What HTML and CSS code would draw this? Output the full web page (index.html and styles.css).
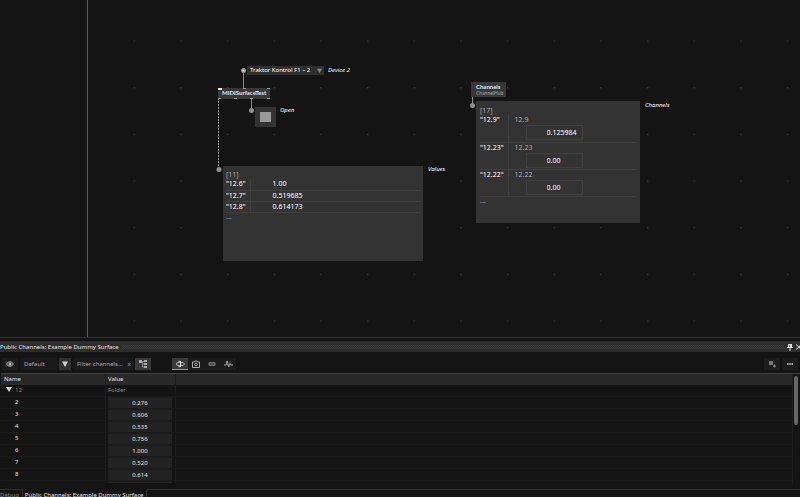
FILE: index.html
```
<!DOCTYPE html>
<html lang="en">
<head>
  <meta charset="UTF-8">
  <title>Public Channels: Example Dummy Surface</title>
  <link rel="stylesheet" href="styles.css">
</head>
<body>
  <main class="patch">
    <svg class="wires" aria-hidden="true">
      <defs>
        <pattern id="grid" x="-58" y="53" width="140" height="140" patternUnits="userSpaceOnUse" patternTransform="scale(.3333)">
          <rect x="39" y="69" width="4" height="3" fill="#4a4a4a"/>
        </pattern>
      </defs>
      <rect x="100" y="20" width="700" height="310" fill="url(#grid)"/>
      <path d="M87.5 0V338" stroke="#5c5c5c"/>
      <path d="M243.500 71V89M251.500 98V111M472.500 96V105" stroke="#8a8a8a"/>
      <path d="M218.500 98V169" stroke="#999" stroke-dasharray="2 1"/>
      <circle cx="243.500" cy="70.500" r="2.500" fill="#999"/>
      <circle cx="243.500" cy="70.500" r="1" fill="#eee"/>
      <circle cx="251.500" cy="110.500" r="2.500" fill="#909090"/>
      <circle cx="219" cy="169.500" r="2.500" fill="#909090"/>
      <circle cx="472.500" cy="105.500" r="2.500" fill="#909090"/>
    </svg>

    <select class="device" aria-label="Device 2">
      <option>Traktor Kontrol F1 – 2</option>
    </select>
    <svg class="device-arrow" viewBox="0 0 6 6"><path d="M0 1h6L3 6z" fill="#888"/></svg>
    <span class="label label-device">Device 2</span>

    <div class="node node-midi">
      MIDISurfaceTest
      <svg class="pins" viewBox="0 0 52 11">
        <path d="M0 .5h4M0 1.500h4" stroke="#eee"/>
        <path d="M25 .5h3M49 .5h3M0 10.500h3M16 10.500h3M32 10.500h3M49 10.500h3" stroke="#999"/>
      </svg>
    </div>
    <button class="bang" type="button" aria-label="Open"></button>
    <span class="label label-open">Open</span>

    <section class="pad pad-values">
      <div class="count">[11]</div>
      <table class="spread">
        <tr><th>"12.6"</th><td>1.00</td></tr>
        <tr><th>"12.7"</th><td>0.519685</td></tr>
        <tr><th>"12.8"</th><td>0.614173</td></tr>
      </table>
      <div class="more">...</div>
    </section>
    <span class="label label-values">Values</span>

    <div class="node node-hub">
      <div>Channels</div>
      <div class="category">ChannelHub</div>
    </div>
    <section class="pad pad-channels">
      <div class="count">[17]</div>
      <table class="spread spread-boxes">
        <tr><th>"12.9"</th><td><label for="c9">12.9</label><input id="c9" value="0.125984"></td></tr>
        <tr><th>"12.23"</th><td><label for="c23">12.23</label><input id="c23" value="0.00"></td></tr>
        <tr><th>"12.22"</th><td><label for="c22">12.22</label><input id="c22" value="0.00"></td></tr>
      </table>
      <div class="more">...</div>
    </section>
    <span class="label label-channels">Channels</span>
  </main>

  <section class="panel">
    <header class="titlebar">
      <span>Public Channels: Example Dummy Surface</span>
      <i class="grip"></i>
      <button type="button" aria-label="Pin">
        <svg width="6" height="8" viewBox="0 0 6 8"><path d="M1 1h4v3h1v1H0V4h1z" fill="#ddd"/><path d="M3 5v3" stroke="#ddd"/><path d="M2.500 2v2" stroke="#666"/></svg>
      </button>
      <button type="button" aria-label="Close">
        <svg width="4" height="6" viewBox="0 0 4 6"><path d="M0 .5l3 2.500-3 2.500M5 .5L3 3l2 2.500" fill="none" stroke="#ddd"/></svg>
      </button>
    </header>

    <div class="toolbar">
      <button class="tool eye" type="button" aria-label="Show">
        <svg width="8" height="8" viewBox="0 0 8 8"><path d="M.5 4Q4-.5 7.500 4 4 8.500 .5 4z" fill="none" stroke="#bbb"/><circle cx="4" cy="4" r="1.500" fill="#bbb"/></svg>
      </button>
      <div class="preset">
        <select aria-label="Preset"><option>Default</option></select>
        <svg width="12" height="12" viewBox="0 0 12 12"><path d="M3 3.500h6L6 9z" fill="#ccc"/></svg>
      </div>
      <div class="filter">
        <input aria-label="Filter channels" placeholder="Filter channels...">
        <button type="button" aria-label="Clear filter">x</button>
      </div>
      <button class="tool tree on" type="button" aria-label="Tree view">
        <svg width="10" height="10" viewBox="0 0 10 10" fill="#aaa"><path d="M1 1h3v3H1zM6 1h3v2H6zM6 4h3v2H6zM6 7h3v2H6z"/><path d="M4 2.500h2M4.500 2.500V8H6M4.500 5H6" fill="none" stroke="#888"/></svg>
      </button>
      <div class="modes">
        <button class="tool on active" type="button" aria-label="Input and output">
          <svg width="10" height="8" viewBox="0 0 10 8" fill="none" stroke="#bbb"><path d="M4.500 2.500V1L1 4l3.500 3V5.500H3"/><path d="M4.500 2.500H3"/><path d="M5.500 1v6" stroke="#ddd"/><path d="M6 2.500h2L9.500 4 8 5.500H6" /></svg>
        </button>
        <button class="tool" type="button" aria-label="Snapshot">
          <svg width="8" height="8" viewBox="0 0 8 8" fill="none" stroke="#aaa"><path d="M.5 2h2L3 1h2l.5 1h2v5.500h-7z"/><circle cx="4" cy="4.500" r="1.300"/></svg>
        </button>
        <button class="tool" type="button" aria-label="Link">
          <svg width="8" height="6" viewBox="0 0 8 6" fill="none" stroke="#999"><path d="M3.500 1.500H2.300a1.500 1.500 0 0 0 0 3h1.200M4.500 1.500h1.200a1.500 1.500 0 0 1 0 3H4.500M2.500 3h3"/></svg>
        </button>
        <button class="tool" type="button" aria-label="Activity">
          <svg width="9" height="8" viewBox="0 0 9 8" fill="none" stroke="#aaa"><path d="M0 5h2L3.200 1l1.500 6L6 3.500 7 5h2"/></svg>
        </button>
      </div>
      <div class="tools-right">
        <button class="tool" type="button" aria-label="Add channel">
          <svg width="8" height="8" viewBox="0 0 8 8"><path d="M1 1h4v4H1z" fill="#777"/><path d="M5 6h3M6.500 4.500v3" stroke="#999"/></svg>
        </button>
        <button class="tool" type="button" aria-label="More">
          <svg width="6" height="2" viewBox="0 0 6 2"><path d="M0 1h6" stroke="#aaa" stroke-width="2" stroke-dasharray="1.500 .7"/></svg>
        </button>
      </div>
    </div>

    <div class="list">
      <table class="channels">
        <thead>
          <tr><th class="col-name">Name</th><th class="col-value">Value</th><th></th></tr>
        </thead>
        <tbody>
          <tr class="folder">
            <td><svg width="6" height="6" viewBox="0 0 6 6"><path d="M0 1h6L3 6z" fill="#ccc"/></svg>12</td>
            <td>Folder</td><td></td>
          </tr>
          <tr><td><label for="v2">2</label></td><td><input id="v2" value="0.276"></td><td></td></tr>
          <tr><td><label for="v3">3</label></td><td><input id="v3" value="0.606"></td><td></td></tr>
          <tr><td><label for="v4">4</label></td><td><input id="v4" value="0.535"></td><td></td></tr>
          <tr><td><label for="v5">5</label></td><td><input id="v5" value="0.756"></td><td></td></tr>
          <tr><td><label for="v6">6</label></td><td><input id="v6" value="1.000"></td><td></td></tr>
          <tr><td><label for="v7">7</label></td><td><input id="v7" value="0.520"></td><td></td></tr>
          <tr><td><label for="v8">8</label></td><td><input id="v8" value="0.614"></td><td></td></tr>
          <tr><td></td><td><input aria-label="Next channel"></td><td></td></tr>
        </tbody>
      </table>
      <div class="scrollbar"><div class="thumb"></div></div>
    </div>

    <nav class="tabs">
      <button type="button">Debug</button>
      <button class="current" type="button">Public Channels: Example Dummy Surface</button>
      <i></i>
    </nav>
  </section>
</body>
</html>
```
FILE: styles.css
```
* {
  box-sizing: border-box;
}
body {
  margin: 0;
  height: 100vh;
  display: flex;
  flex-direction: column;
  overflow: hidden;
  background: #141414;
  color: #e4e4e4;
  font-family: "Noto Sans", "Open Sans", sans-serif;
  font-size: 6px;
  line-height: 12px;
}
button, input, select {
  margin: 0;
  padding: 0;
  border: 0;
  border-radius: 0;
  background: none;
  color: inherit;
  font: inherit;
  appearance: none;
}
table {
  border-collapse: collapse;
}
th, td {
  padding: 0;
  text-align: left;
  font-weight: normal;
}
svg {
  display: block;
}

/* patch canvas */
.patch {
  position: relative;
  flex: 1;
  min-height: 0;
  overflow: hidden;
  border-bottom: 1px solid #303030;
  font-size: 7px;
  line-height: 10px;
  color: #fff;
}
.wires {
  position: absolute;
  width: 100%;
  height: 100%;
}
.device {
  position: absolute;
  left: 247px;
  top: 66px;
  width: 77px;
  height: 9px;
  padding-left: 3px;
  background: #2f2f2f;
  font-size: 6px;
  line-height: 9px;
}
.device-arrow {
  position: absolute;
  left: 317px;
  top: 68px;
  width: 5px;
  height: 5px;
  pointer-events: none;
}
.label {
  position: absolute;
  font-size: 6px;
  font-style: italic;
}
.label-device { left: 328px; top: 65px; }
.label-open { left: 280px; top: 105px; }
.label-values { left: 428px; top: 164px; }
.label-channels { left: 645px; top: 100px; }
.node {
  position: absolute;
  background: #383838;
  color: #e4e4e4;
  font-family: Lato, "Noto Sans", sans-serif;
  font-weight: bold;
  font-size: 6px;
}
.node-midi {
  left: 218px;
  top: 88px;
  width: 52px;
  height: 11px;
  padding-left: 4px;
  line-height: 10px;
}
.pins {
  position: absolute;
  left: 0;
  top: 0;
  width: 52px;
  height: 11px;
}
.node-hub {
  left: 471px;
  top: 82px;
  width: 35px;
  height: 15px;
  padding: 1px 0 0 5px;
  line-height: 8px;
}
.category {
  font-size: 5px;
  font-weight: normal;
  line-height: 5px;
  color: #aaa;
}
.bang {
  position: absolute;
  left: 255px;
  top: 107px;
  width: 21px;
  height: 20px;
  border: 5px solid #333;
  background: #999;
}
.pad {
  position: absolute;
  padding: 4px 3px;
  background: #333;
}
.pad-values {
  left: 223px;
  top: 166px;
  width: 200px;
  height: 95px;
}
.pad-channels {
  left: 476px;
  top: 101px;
  width: 164px;
  height: 122px;
  padding: 5px 4px;
}
.count, .more {
  height: 9px;
  color: #aaa;
}
.more {
  line-height: 8px;
}
.spread {
  width: 100%;
}
.spread tr {
  height: 11px;
  border-bottom: 1px solid #3f3f3f;
}
.spread th {
  width: 24px;
  border-right: 1px solid #3f3f3f;
  vertical-align: top;
}
.spread td {
  padding-left: 22px;
}
.spread-boxes tr {
  height: 27px;
}
.spread-boxes th {
  width: 28px;
}
.spread-boxes td {
  padding-left: 6px;
  vertical-align: top;
}
.spread-boxes label {
  display: block;
  color: #aaa;
}
.spread-boxes input {
  display: block;
  width: 57px;
  height: 15px;
  margin-left: 11px;
  padding-left: 20px;
  border: 1px solid #3f3f3f;
}

/* channel browser */
.panel {
  display: flex;
  flex-direction: column;
  padding-top: 3px;
}
.titlebar {
  display: flex;
  align-items: center;
  gap: 3px;
  height: 11px;
  background: #2d2d2d;
}
.grip {
  flex: 1;
  height: 4px;
  background: repeating-conic-gradient(#3c3c3c 0 25%, #2d2d2d 0 50%) 0 0 / 2px 2px;
}
.toolbar {
  display: flex;
  gap: 2px;
  height: 21px;
  padding: 6px 2px 2px;
}
.tool {
  display: flex;
  align-items: center;
  justify-content: center;
  width: 16px;
  height: 12px;
  background: #1c1c1c;
}
.tool.on {
  background: #3a3a3a;
}
.tool.active {
  border-bottom: 1px solid #999;
}
.preset {
  display: flex;
  width: 51px;
  height: 12px;
  background: #1a1a1a;
}
.preset select {
  width: 39px;
  padding-left: 4px;
  color: #aaa;
}
.preset svg {
  background: #303030;
}
.filter {
  display: flex;
  width: 60px;
  height: 12px;
  background: #1a1a1a;
  color: #aaa;
}
.filter input {
  flex: 1;
  min-width: 0;
  padding-left: 4px;
}
.filter input::placeholder {
  color: #aaa;
}
.filter button {
  width: 8px;
}
.tree {
  margin-right: 19px;
}
.modes {
  display: flex;
}
.tools-right {
  display: flex;
  gap: 2px;
  margin-left: auto;
}
.list {
  display: flex;
  height: 110px;
  margin-left: 1px;
  overflow: hidden;
  border-top: 1px solid #404040;
}
.channels {
  flex: 1;
  display: table;
  table-layout: fixed;
  border-collapse: separate;
  border-spacing: 0;
  height: 107px;
}
.channels td, .channels th {
  height: 12px;
  border-right: 1px solid #1e1e1e;
  border-bottom: 1px solid #1b1b1b;
  line-height: 11px;
}
.channels th {
  height: 11px;
  padding-left: 3px;
  border-bottom: 0;
  background: #292929;
}
.channels td:first-child {
  padding-left: 14px;
}
.channels .col-name {
  width: 105px;
}
.channels .col-value {
  width: 70px;
  padding-left: 2px;
}
.channels input {
  display: block;
  width: 64px;
  height: 11px;
  margin-left: 2px;
  border-top: 1px solid #1b1b1b;
  background: #222;
  text-align: center;
}
.channels .folder td {
  padding-left: 2px;
  color: #888;
}
.channels .folder td:first-child {
  padding-left: 5px;
}
.folder svg {
  display: inline-block;
  margin-right: 3px;
}
.scrollbar {
  width: 7px;
  padding: 2px 1px;
}
.thumb {
  width: 4px;
  height: 49px;
  border-radius: 2px;
  background: #666;
}
.tabs {
  display: flex;
  height: 8px;
  margin-top: 6px;
  color: #888;
}
.tabs button {
  height: 10px;
  padding-right: 3px;
  border-top: 1px solid #303030;
  border-right: 1px solid #303030;
  line-height: 8px;
  white-space: nowrap;
}
.tabs .current {
  padding-left: 2px;
  border-top-color: #141414;
  color: #e4e4e4;
}
.tabs i {
  flex: 1;
  border-top: 1px solid #303030;
}
```
